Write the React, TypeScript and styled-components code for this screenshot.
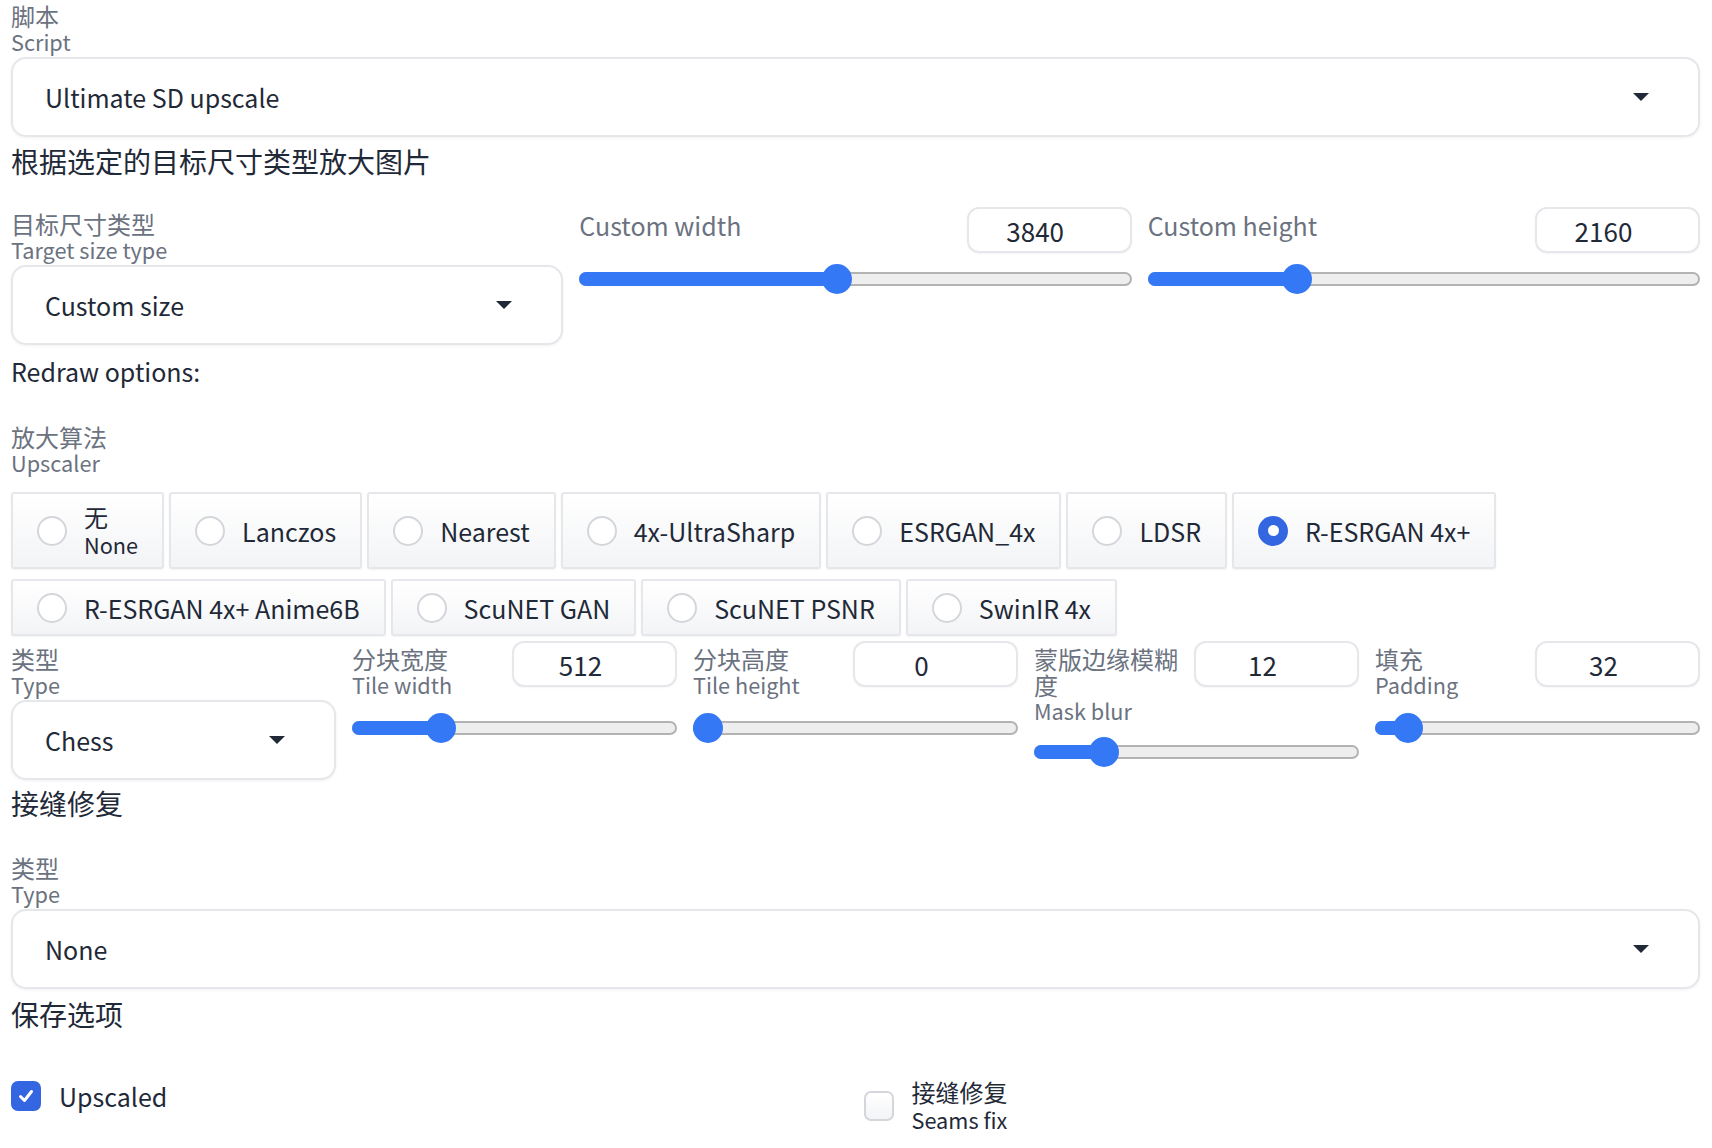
import React from "react";
import styled, { createGlobalStyle } from "styled-components";

const GlobalStyle = createGlobalStyle`
  html, body { margin: 0; padding: 0; background: #ffffff; }
  body {
    font-family: "Noto Sans CJK SC", "Noto Sans", sans-serif;
    color: #1f2937;
  }
  * { box-sizing: border-box; }
`;

const Page = styled.div`
  display: flex;
  flex-direction: column;
  width: 1712px;
  padding: 3px 12px 0 11px;
`;

const Field = styled.div<{ $mt?: number }>`
  display: flex;
  flex-direction: column;
  min-width: 0;
  margin-top: ${(p) => p.$mt ?? 0}px;
`;

const LabelText = styled.div<{ $pt?: number }>`
  font-size: 24px;
  line-height: 26px;
  color: #6b7280;
  padding-top: ${(p) => p.$pt ?? 0}px;
  & > span { display: block; }
`;

const Zh = styled.span`
  font-size: 24px;
`;

const En = styled.span`
  font-size: 21.7px;
`;

const PlainLabel = styled.div`
  font-size: 25px;
  line-height: 36px;
  color: #6b7280;
`;

const SelectBox = styled.div`
  margin-top: 2px;
  height: 80px;
  border: 2px solid #e5e7eb;
  border-radius: 15px;
  background: #ffffff;
  box-shadow: 0 1px 3px rgba(0, 0, 0, 0.06);
  display: flex;
  align-items: center;
  justify-content: space-between;
  padding: 0 49px 0 32px;
  font-size: 25px;
  color: #1f2937;
`;

const Caret = styled.span`
  width: 0;
  height: 0;
  border-left: 8px solid transparent;
  border-right: 8px solid transparent;
  border-top: 8px solid #1f2937;
`;

const Prose = styled.div<{ $mt: number; $latin?: boolean }>`
  font-size: ${(p) => (p.$latin ? 25 : 28)}px;
  line-height: 36px;
  color: #1f2937;
  margin-top: ${(p) => p.$mt}px;
`;

const Grid = styled.div<{ $cols: number; $mt: number }>`
  display: grid;
  grid-template-columns: repeat(${(p) => p.$cols}, minmax(0, 1fr));
  column-gap: 16px;
  align-items: start;
  margin-top: ${(p) => p.$mt}px;
`;

const SliderHead = styled.div`
  display: flex;
  justify-content: space-between;
  align-items: flex-start;
  gap: 8px;
`;

const NumberBox = styled.div`
  flex: none;
  width: 165px;
  height: 46px;
  border: 2px solid #e5e7eb;
  border-radius: 12px;
  background: #ffffff;
  box-shadow: 0 1px 2px rgba(0, 0, 0, 0.04);
  display: flex;
  align-items: center;
  justify-content: center;
  padding: 0 28px 0 0;
  font-size: 26px;
  color: #1f2937;
`;

const Track = styled.div<{ $mt: number }>`
  position: relative;
  height: 30px;
  margin-top: ${(p) => p.$mt}px;
`;

const Rail = styled.div`
  position: absolute;
  left: 0;
  right: 0;
  top: 8px;
  height: 14px;
  border-radius: 7px;
  background: #eeeeee;
  border: 2px solid #b3b3b3;
`;

const Fill = styled.div`
  position: absolute;
  left: 0;
  top: 8px;
  height: 14px;
  border-radius: 7px 0 0 7px;
  background: #3478f6;
`;

const Thumb = styled.div`
  position: absolute;
  top: 0;
  width: 30px;
  height: 30px;
  margin-left: -15px;
  border-radius: 50%;
  background: #3478f6;
`;

const RadioWrap = styled.div`
  display: flex;
  flex-wrap: wrap;
  gap: 10px 5px;
  margin-top: 16px;
`;

const RadioItem = styled.label`
  display: flex;
  align-items: center;
  gap: 17px;
  padding: 8.5px 24px;
  border: 2px solid #e5e7eb;
  border-radius: 3px;
  background: linear-gradient(#ffffff, #f3f4f6);
  box-shadow: 0 1px 2px rgba(0, 0, 0, 0.05);
  font-size: 25px;
  line-height: 36px;
  color: #1f2937;
`;

const RadioDual = styled.span`
  display: flex;
  flex-direction: column;
  line-height: 28px;
`;

const RadioCircle = styled.span<{ $on: boolean }>`
  flex: none;
  width: 30px;
  height: 30px;
  border-radius: 50%;
  border: 2px solid ${(p) => (p.$on ? "#3366e0" : "#d4d6db")};
  background: ${(p) => (p.$on ? "#3366e0" : "#ffffff")};
  display: flex;
  align-items: center;
  justify-content: center;
  &::after {
    content: "";
    display: ${(p) => (p.$on ? "block" : "none")};
    width: 11px;
    height: 11px;
    border-radius: 50%;
    background: #ffffff;
  }
`;

const CheckItem = styled.label`
  display: flex;
  align-items: center;
  gap: 18px;
  font-size: 25px;
  line-height: 36px;
  color: #1f2937;
`;

const CheckDual = styled.span`
  display: flex;
  flex-direction: column;
  line-height: 28px;
`;

const CheckBox = styled.span<{ $on: boolean }>`
  flex: none;
  width: 30px;
  height: 30px;
  border-radius: 7px;
  border: 2px solid ${(p) => (p.$on ? "#3366e0" : "#d4d6db")};
  background: ${(p) => (p.$on ? "#3366e0" : "linear-gradient(#ffffff, #f3f4f6)")};
  display: flex;
  align-items: center;
  justify-content: center;
`;

function Label({ zh, en, pt }: { zh: string; en: string; pt?: number }) {
  return (
    <LabelText $pt={pt}>
      <Zh>{zh}</Zh>
      <En>{en}</En>
    </LabelText>
  );
}

function Select({ value }: { value: string }) {
  return (
    <SelectBox>
      <span>{value}</span>
      <Caret />
    </SelectBox>
  );
}

function Slider({ frac, mt }: { frac: number; mt: number }) {
  const pos = `calc(15px + ${frac} * (100% - 30px))`;
  return (
    <Track $mt={mt}>
      <Rail />
      <Fill style={{ width: pos }} />
      <Thumb style={{ left: pos }} />
    </Track>
  );
}

function SliderField({
  label,
  value,
  frac,
  mt,
}: {
  label: React.ReactNode;
  value: string;
  frac: number;
  mt: number;
}) {
  return (
    <Field>
      <SliderHead>
        {label}
        <NumberBox>{value}</NumberBox>
      </SliderHead>
      <Slider frac={frac} mt={mt} />
    </Field>
  );
}

const upscalers: { name: string; zh?: string }[] = [
  { name: "None", zh: "无" },
  { name: "Lanczos" },
  { name: "Nearest" },
  { name: "4x-UltraSharp" },
  { name: "ESRGAN_4x" },
  { name: "LDSR" },
  { name: "R-ESRGAN 4x+" },
  { name: "R-ESRGAN 4x+ Anime6B" },
  { name: "ScuNET GAN" },
  { name: "ScuNET PSNR" },
  { name: "SwinIR 4x" },
];

export default function App() {
  return (
    <>
      <GlobalStyle />
      <Page>
        <Field>
          <Label zh="脚本" en="Script" />
          <Select value="Ultimate SD upscale" />
        </Field>
        <Prose $mt={6}>根据选定的目标尺寸类型放大图片</Prose>

        <Grid $cols={3} $mt={28}>
          <Field>
            <Label zh="目标尺寸类型" en="Target size type" pt={4} />
            <Select value="Custom size" />
          </Field>
          <SliderField
            label={<PlainLabel>Custom width</PlainLabel>}
            value="3840"
            frac={(3840 - 64) / 8128}
            mt={11}
          />
          <SliderField
            label={<PlainLabel>Custom height</PlainLabel>}
            value="2160"
            frac={(2160 - 64) / 8128}
            mt={11}
          />
        </Grid>

        <Prose $mt={8} $latin>
          Redraw options:
        </Prose>

        <Field $mt={35}>
          <Label zh="放大算法" en="Upscaler" />
          <RadioWrap>
            {upscalers.map((u) => (
              <RadioItem key={u.name}>
                <RadioCircle $on={u.name === "R-ESRGAN 4x+"} />
                {u.zh ? (
                  <RadioDual>
                    <Zh>{u.zh}</Zh>
                    <En>{u.name}</En>
                  </RadioDual>
                ) : (
                  <span>{u.name}</span>
                )}
              </RadioItem>
            ))}
          </RadioWrap>
        </Field>

        <Grid $cols={5} $mt={5}>
          <Field>
            <Label zh="类型" en="Type" pt={5} />
            <Select value="Chess" />
          </Field>
          <SliderField
            label={<Label zh="分块宽度" en="Tile width" pt={5} />}
            value="512"
            frac={512 / 2048}
            mt={15}
          />
          <SliderField
            label={<Label zh="分块高度" en="Tile height" pt={5} />}
            value="0"
            frac={0}
            mt={15}
          />
          <SliderField
            label={
              <LabelText $pt={5}>
                <Zh>蒙版边缘模糊度</Zh>
                <En>Mask blur</En>
              </LabelText>
            }
            value="12"
            frac={12 / 64}
            mt={13}
          />
          <SliderField
            label={<Label zh="填充" en="Padding" pt={5} />}
            value="32"
            frac={32 / 512}
            mt={15}
          />
        </Grid>

        <Prose $mt={5}>接缝修复</Prose>

        <Field $mt={34}>
          <Label zh="类型" en="Type" />
          <Select value="None" />
        </Field>

        <Prose $mt={7}>保存选项</Prose>

        <Grid $cols={2} $mt={46}>
          <CheckItem>
            <CheckBox $on>
              <svg width="18" height="18" viewBox="0 0 18 18" fill="none">
                <path
                  d="M3.5 9.5 L7.5 13.5 L14.5 4.5"
                  stroke="#ffffff"
                  strokeWidth="3"
                  strokeLinecap="round"
                  strokeLinejoin="round"
                />
              </svg>
            </CheckBox>
            <span>Upscaled</span>
          </CheckItem>
          <CheckItem>
            <CheckBox $on={false} />
            <CheckDual>
              <Zh>接缝修复</Zh>
              <En>Seams fix</En>
            </CheckDual>
          </CheckItem>
        </Grid>
      </Page>
    </>
  );
}
